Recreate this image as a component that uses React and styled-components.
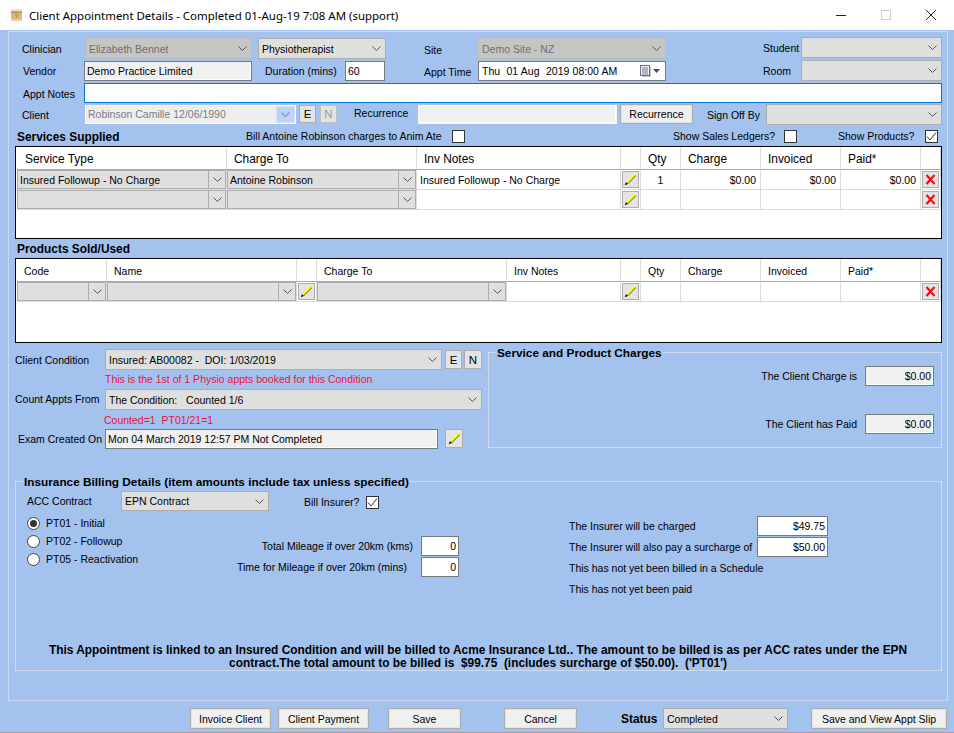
import React from "react";
import styled, { createGlobalStyle, css } from "styled-components";

const Global = createGlobalStyle`
  html, body { margin: 0; padding: 0; background: #a3c2ee; }
  body { font-family: "Liberation Sans", Arial, sans-serif; font-size: 10.5px; color: #000; }
  * { box-sizing: border-box; }
`;

const place = css`
  flex: none;
  margin: ${(p) => p.$t || 0}px 0 0 ${(p) => p.$l || 0}px;
  ${(p) => p.$w && `width: ${p.$w}px;`}
`;

const Window = styled.div`
  width: 954px;
  height: 733px;
  background: #a3c2ee;
  overflow: hidden;
  display: flex;
  flex-direction: column;
`;
const TitleBar = styled.header`
  flex: none;
  height: 30px;
  background: #fff;
  display: flex;
  align-items: center;
  padding-left: 10px;
`;
const TitleText = styled.div`
  margin-left: 6px;
  font-family: "Noto Sans", "Open Sans", sans-serif;
  font-size: 11.45px;
  white-space: nowrap;
`;
const WinButtons = styled.div`
  margin-left: auto;
  display: flex;
  align-items: center;
  margin-right: 18px;
  gap: 35px;
`;
const Panel = styled.main`
  flex: none;
  margin: 1px 0 0 8px;
  width: 940px;
  height: 670px;
  border: 1px solid #cbdaf0;
`;
const Row = styled.div`
  display: flex;
  align-items: flex-start;
  height: ${(p) => p.$h}px;
  margin-top: ${(p) => p.$mt || 0}px;
`;
const Label = styled.div`
  ${place}
  height: 14px;
  line-height: 14px;
  white-space: nowrap;
`;
const Bold = styled(Label)`
  font-weight: 700;
  font-size: 11.9px;
`;
const Red = styled(Label)`
  color: #f0103c;
`;
const ComboBox = styled.div`
  ${place}
  height: ${(p) => p.$h || 21}px;
  display: flex;
  align-items: center;
  background: ${(p) => (p.$off ? "#c5c5c5" : "#dfdfdf")};
  border: 1px solid ${(p) => (p.$off ? "#bcbcbc" : "#adadad")};
  color: ${(p) => (p.$off ? "#6f6f6f" : "#000")};
  padding-left: ${(p) => p.$pl ?? 3}px;
  white-space: nowrap;
  overflow: hidden;
`;
const ComboText = styled.span`
  flex: 1;
  min-width: 0;
`;
const ArrowZone = styled.span`
  flex: none;
  width: ${(p) => (p.$split ? 17 : 18)}px;
  height: 100%;
  display: flex;
  align-items: center;
  justify-content: center;
  ${(p) => p.$split && "border-left: 1px solid #adadad;"}
`;
const ClientCombo = styled.div`
  ${place}
  height: 19px;
  display: flex;
  align-items: stretch;
  background: #eee;
  border: 1px solid #f6f6f6;
  color: #7c7c7c;
  padding-left: 2px;
  line-height: 16px;
  white-space: nowrap;
`;
const ClientArrow = styled.span`
  margin-left: auto;
  width: 19px;
  background: #bfd1f4;
  border: 1px solid #d7e3f9;
  display: flex;
  align-items: center;
  justify-content: center;
`;
const TextBox = styled.div`
  ${place}
  height: ${(p) => p.$h || 20}px;
  line-height: ${(p) => (p.$h || 20) - 2}px;
  background: ${(p) => (p.$ro ? "#f0f0f0" : "#fff")};
  border: 1px solid ${(p) => p.$bc || "#7a7a7a"};
  ${(p) => p.$ro && "box-shadow: inset 0 -1px 0 #fff, inset -1px 0 0 #fff;"}
  padding: 0 2px;
  text-align: ${(p) => (p.$right ? "right" : "left")};
  white-space: nowrap;
`;
const DateBox = styled(TextBox)`
  display: flex;
  align-items: center;
  gap: 0;
  padding-left: 3px;
  word-spacing: 0.3px;
`;
const DateIcons = styled.span`
  margin-left: auto;
  margin-right: 3px;
  display: flex;
  align-items: center;
  gap: 2px;
`;
const SmallBtn = styled.div`
  ${place}
  height: ${(p) => p.$h || 19}px;
  width: ${(p) => p.$w || 17}px;
  background: #e4e4e4;
  border: 1px solid ${(p) => (p.$dim ? "#c2c2c2" : "#adadad")};
  color: ${(p) => (p.$dim ? "#9a9a9a" : "#000")};
  display: flex;
  align-items: center;
  justify-content: center;
  font-size: 11.5px;
`;
const PushBtn = styled.div`
  ${place}
  height: ${(p) => p.$h || 21}px;
  background: #f0f0f0;
  border: 1px solid #adadad;
  box-shadow: inset 0 0 0 1px #e2e2e2;
  display: flex;
  align-items: center;
  justify-content: center;
  white-space: nowrap;
`;
const CheckSquare = styled.div`
  ${place}
  width: 13px;
  height: 13px;
  background: #fff;
  border: 1px solid #333;
  display: flex;
  align-items: center;
  justify-content: center;
`;
const Table = styled.section`
  margin-left: 6px;
  width: 927px;
  height: ${(p) => p.$h}px;
  background: #fff;
  border: 1px solid #000;
  padding: 0 0 0 1px;
`;
const Grid = styled.div`
  display: grid;
  grid-template-columns: ${(p) => p.$cols};
  grid-auto-rows: auto;
`;
const HeadCell = styled.div`
  height: 23px;
  line-height: 24px;
  padding-left: ${(p) => p.$pl || 7}px;
  font-size: ${(p) => p.$fs}px;
  border-right: 1px solid #dcdcdc;
  border-bottom: 1px solid #a8a8a8;
  white-space: nowrap;
`;
const Cell = styled.div`
  height: 20px;
  line-height: 20px;
  padding: 0 ${(p) => (p.$right ? 4 : 3)}px 0 3px;
  border-right: 1px solid #dcdcdc;
  border-bottom: 1px solid #dcdcdc;
  text-align: ${(p) => (p.$right ? "right" : p.$center ? "center" : "left")};
  white-space: nowrap;
  overflow: hidden;
`;
const ComboCell = styled(Cell)`
  padding: 0;
  border-right: 1px solid #dcdcdc;
`;
const IconCell = styled(Cell)`
  padding: 1px 0 0 1px;
`;
const Lower = styled.div`
  display: flex;
  align-items: flex-start;
  margin-top: 6px;
  height: 100px;
`;
const LeftColumn = styled.div`
  flex: none;
  width: 473px;
`;
const GroupBox = styled.section`
  position: relative;
  flex: none;
  border: 1px solid #cfdcee;
`;
const ChargesBox = styled(GroupBox)`
  margin: 3px 0 0 6px;
  width: 454px;
  height: 96px;
  padding: 13px 7px 0 0;
`;
const Legend = styled.div`
  position: absolute;
  left: 7px;
  top: -7px;
  padding: 0 1px;
  height: 14px;
  line-height: 14px;
  background: #a3c2ee;
  font-weight: 700;
  font-size: 11.8px;
  white-space: nowrap;
`;
const ChargeRow = styled.div`
  display: flex;
  justify-content: flex-end;
  align-items: center;
  gap: 8px;
  height: 20px;
  margin-bottom: 28px;
`;
const InsuranceBox = styled(GroupBox)`
  margin: 32px 0 0 6px;
  width: 927px;
  height: 190px;
  padding-top: 9px;
`;
const Columns = styled.div`
  display: flex;
  align-items: flex-start;
  height: 130px;
  margin-top: 3px;
`;
const RadioColumn = styled.div`
  flex: none;
  margin-left: 11px;
  width: 200px;
`;
const RadioRow = styled.div`
  display: flex;
  align-items: center;
  height: 18px;
  gap: 6px;
`;
const RadioDot = styled.div`
  width: 13px;
  height: 13px;
  border-radius: 50%;
  background: #fff;
  border: 1px solid #444;
  display: flex;
  align-items: center;
  justify-content: center;
  &::after {
    content: "";
    display: ${(p) => (p.$on ? "block" : "none")};
    width: 7px;
    height: 7px;
    border-radius: 50%;
    background: #333;
  }
`;
const MileageColumn = styled.div`
  flex: none;
  width: 232px;
  padding-top: 22px;
`;
const MileageRow = styled.div`
  display: flex;
  justify-content: flex-end;
  align-items: center;
  gap: ${(p) => p.$gap}px;
  height: 20px;
  margin-bottom: 1px;
`;
const InsurerColumn = styled.div`
  flex: none;
  margin-left: 110px;
  width: 259px;
  padding-top: 2px;
`;
const InsurerRow = styled.div`
  display: flex;
  justify-content: space-between;
  align-items: flex-start;
  height: 21px;
  line-height: 20px;
  white-space: nowrap;
`;
const Note = styled.div`
  font-weight: 700;
  font-size: 11.9px;
  line-height: 13px;
  text-align: center;
  white-space: nowrap;
  margin-left: -1px;
`;
const Footer = styled.footer`
  flex: none;
  height: 31px;
  display: flex;
  align-items: flex-start;
  padding: 7px 0 0 190px;
`;
const BottomEdge = styled.div`
  flex: none;
  height: 1px;
  background: #a0a0a0;
`;

const Chevron = () => (
  <svg width="9" height="5" viewBox="0 0 9 5">
    <path d="M0.5 0.5 L4.5 4.5 L8.5 0.5" fill="none" stroke="#555" strokeWidth="1" />
  </svg>
);
const ChevronPale = () => (
  <svg width="9" height="5" viewBox="0 0 9 5">
    <path d="M0.5 0.5 L4.5 4.5 L8.5 0.5" fill="none" stroke="#8ea4c8" strokeWidth="1.6" />
  </svg>
);
const Combo = ({ text = "", split, off, ...rest }) => (
  <ComboBox $off={off} {...rest}>
    <ComboText>{text}</ComboText>
    <ArrowZone $split={split}>
      <Chevron />
    </ArrowZone>
  </ComboBox>
);
const Tick = () => (
  <svg width="11" height="11" viewBox="0 0 11 11">
    <path d="M1 5.5 L4 9 L10 1.5" fill="none" stroke="#333" strokeWidth="1" />
  </svg>
);
const Pen = () => (
  <svg width="13" height="13" viewBox="0 0 13 13">
    <path d="M3.5 10.5 L11.5 2.5" stroke="#444" strokeWidth="1.2" fill="none" />
    <path d="M2.8 9.8 L11 1.6" stroke="#ffff00" strokeWidth="2" fill="none" />
    <path d="M0.8 12.2 L2 9 L4 11 Z" fill="#111" />
  </svg>
);
const RedX = () => (
  <svg width="11" height="11" viewBox="0 0 11 11">
    <path d="M1.5 1 L9.5 10 M9.5 1 L1.5 10" stroke="#ee1111" strokeWidth="2.2" fill="none" />
  </svg>
);
const PenBtn = (p) => (
  <SmallBtn $w={17} $h={17} {...p}>
    <Pen />
  </SmallBtn>
);
const XBtn = () => (
  <SmallBtn $w={17} $h={17}>
    <RedX />
  </SmallBtn>
);
const AppIcon = () => (
  <svg width="13" height="14" viewBox="0 0 13 14">
    <path d="M1 3 L3 1 H10 L12 3 V13 H1 Z" fill="#d8b67c" />
    <path d="M3 1 H10 L12 3.5 H1 Z" fill="#e6ddca" />
    <path d="M1 3.5 H12 V5 H1 Z" fill="#b5935c" />
    <path d="M5 7 Q6.5 5.5 8 7 Q8 8 6.5 8.5 V9.5" fill="none" stroke="#a88550" strokeWidth="1" />
    <rect x="1" y="11" width="11" height="2" fill="#e6cfa2" />
  </svg>
);
const CalendarIcon = () => (
  <svg width="11" height="12" viewBox="0 0 11 12">
    <rect x="0.5" y="0.5" width="9" height="10" fill="#eef0f4" stroke="#6b7280" />
    <path d="M2 3 H8 M2 5 H8 M2 7 H8 M2 9 H8 M3 2 V10 M5 2 V10 M7 2 V10" stroke="#9aa3b2" strokeWidth="1" />
    <path d="M10.5 2 V11.5 H2" stroke="#b9bec7" fill="none" />
  </svg>
);
const Caret = () => (
  <svg width="7" height="4" viewBox="0 0 7 4">
    <path d="M0 0 H7 L3.5 4 Z" fill="#3b4f73" />
  </svg>
);

const serviceCols = "210px 190px 204px 20px 40px 80px 80px 80px 20px";
const productCols = "90px 190px 20px 190px 114px 20px 40px 80px 80px 80px 20px";

const ServicesTable = () => (
  <Table $h={93}>
    <Grid $cols={serviceCols}>
      {["Service Type", "Charge To", "Inv Notes", "", "Qty", "Charge", "Invoiced", "Paid*", ""].map((h, i) => (
        <HeadCell key={i} $fs={11.9} $pl={i === 0 ? 8 : 7}>{h}</HeadCell>
      ))}
      <ComboCell><Combo text="Insured Followup - No Charge" split $h={19} $pl={2} /></ComboCell>
      <ComboCell><Combo text="Antoine Robinson" split $h={19} $pl={2} /></ComboCell>
      <Cell>Insured Followup - No Charge</Cell>
      <IconCell><PenBtn /></IconCell>
      <Cell $center>1</Cell>
      <Cell $right>$0.00</Cell>
      <Cell $right>$0.00</Cell>
      <Cell $right>$0.00</Cell>
      <IconCell><XBtn /></IconCell>
      <ComboCell><Combo split $h={19} /></ComboCell>
      <ComboCell><Combo split $h={19} /></ComboCell>
      <Cell />
      <IconCell><PenBtn /></IconCell>
      <Cell />
      <Cell />
      <Cell />
      <Cell />
      <IconCell><XBtn /></IconCell>
    </Grid>
  </Table>
);

const ProductsTable = () => (
  <Table $h={85}>
    <Grid $cols={productCols}>
      {["Code", "Name", "", "Charge To", "Inv Notes", "", "Qty", "Charge", "Invoiced", "Paid*", ""].map((h, i) => (
        <HeadCell key={i} $fs={10.5}>{h}</HeadCell>
      ))}
      <ComboCell><Combo split $h={19} /></ComboCell>
      <ComboCell><Combo split $h={19} /></ComboCell>
      <IconCell><PenBtn /></IconCell>
      <ComboCell><Combo split $h={19} /></ComboCell>
      <Cell />
      <IconCell><PenBtn /></IconCell>
      <Cell />
      <Cell />
      <Cell />
      <Cell />
      <IconCell><XBtn /></IconCell>
    </Grid>
  </Table>
);

export default function App() {
  return (
    <Window>
      <Global />
      <TitleBar>
        <AppIcon />
        <TitleText>Client Appointment Details - Completed 01-Aug-19 7:08 AM (support)</TitleText>
        <WinButtons>
          <svg width="10" height="1" viewBox="0 0 10 1"><rect width="10" height="1" fill="#222" /></svg>
          <svg width="10" height="10" viewBox="0 0 10 10"><rect x="0.5" y="0.5" width="9" height="9" fill="none" stroke="#ccc" /></svg>
          <svg width="10" height="10" viewBox="0 0 10 10"><path d="M0 0 L10 10 M10 0 L0 10" stroke="#222" strokeWidth="1" /></svg>
        </WinButtons>
      </TitleBar>
      <Panel>
        <Row $h={23} $mt={5}>
          <Label $l={13} $t={5} $w={63}>Clinician</Label>
          <Combo text="Elizabeth Bennet" off $t={1} $w={167} />
          <Combo text="Physiotherapist" $l={6} $t={1} $w={128} />
          <Label $l={38} $t={6} $w={54}>Site</Label>
          <Combo text="Demo Site - NZ" off $t={1} $w={188} />
          <Label $l={97} $t={4} $w={38}>Student</Label>
          <Combo $w={141} />
        </Row>
        <Row $h={23}>
          <Label $l={14} $t={4} $w={61}>Vendor</Label>
          <TextBox $ro $t={1} $w={168}>Demo Practice Limited</TextBox>
          <Label $l={13} $t={4} $w={80}>Duration (mins)</Label>
          <TextBox $t={1} $w={40}>60</TextBox>
          <Label $l={39} $t={5} $w={54}>Appt Time</Label>
          <DateBox $t={1} $w={188}>
            Thu&nbsp; 01 Aug&nbsp; 2019 08:00 AM
            <DateIcons><CalendarIcon /><Caret /></DateIcons>
          </DateBox>
          <Label $l={97} $t={4} $w={38}>Room</Label>
          <Combo $w={141} />
        </Row>
        <Row $h={21}>
          <Label $l={14} $t={4} $w={61}>Appt Notes</Label>
          <TextBox $w={858} $bc="#0078d7" />
        </Row>
        <Row $h={24}>
          <Label $l={13} $t={4} $w={63}>Client</Label>
          <ClientCombo $t={1} $w={211}>
            <span>Robinson Camille 12/06/1990</span>
            <ClientArrow><ChevronPale /></ClientArrow>
          </ClientCombo>
          <SmallBtn $l={3} $t={1} $h={18}>E</SmallBtn>
          <SmallBtn $l={4} $t={1} $h={18} $dim>N</SmallBtn>
          <Label $l={17} $t={2} $w={64}>Recurrence</Label>
          <TextBox $ro $t={1} $w={199} $h={19} $bc="#f6f6f6" />
          <PushBtn $l={3} $w={73} $h={20}>Recurrence</PushBtn>
          <Label $l={14} $t={4} $w={59}>Sign Off By</Label>
          <Combo $w={176} />
        </Row>
        <Row $h={18}>
          <Bold $l={8} $t={2} $w={229}>Services Supplied</Bold>
          <Label $t={1} $w={206}>Bill Antoine Robinson charges to Anim Ate</Label>
          <CheckSquare $t={2} />
          <Label $l={208} $t={1} $w={111}>Show Sales Ledgers?</Label>
          <CheckSquare $t={2} />
          <Label $l={41} $t={1} $w={87}>Show Products?</Label>
          <CheckSquare $t={2}><Tick /></CheckSquare>
        </Row>
        <ServicesTable />
        <Row $h={19}>
          <Bold $l={8} $t={3}>Products Sold/Used</Bold>
        </Row>
        <ProductsTable />
        <Lower>
          <LeftColumn>
            <Row $h={21}>
              <Label $l={6} $t={4} $w={90}>Client Condition</Label>
              <Combo text={"Insured: AB00082 -\u00a0 DOI: 1/03/2019"} $w={337} />
              <SmallBtn $l={3} $t={1}>E</SmallBtn>
              <SmallBtn $l={2} $t={1} $w={18}>N</SmallBtn>
            </Row>
            <Row $h={19}>
              <Red $l={96} $t={2}>This is the 1st of 1 Physio appts booked for this Condition</Red>
            </Row>
            <Row $h={21}>
              <Label $l={6} $t={3} $w={90}>Count Appts From</Label>
              <Combo text={"The Condition:\u00a0\u00a0 Counted 1/6"} $w={377} />
            </Row>
            <Row $h={19}>
              <Red $l={95} $t={3}>Counted=1&nbsp; PT01/21=1</Red>
            </Row>
            <Row $h={20}>
              <Label $l={9} $t={3} $w={87}>Exam Created On</Label>
              <TextBox $ro $w={333}>Mon 04 March 2019 12:57 PM Not Completed</TextBox>
              <SmallBtn $l={7} $w={18}><Pen /></SmallBtn>
            </Row>
          </LeftColumn>
          <ChargesBox>
            <Legend>Service and Product Charges</Legend>
            <ChargeRow>
              <Label>The Client Charge is</Label>
              <TextBox $ro $right $w={69}>$0.00</TextBox>
            </ChargeRow>
            <ChargeRow>
              <Label>The Client has Paid</Label>
              <TextBox $ro $right $w={69}>$0.00</TextBox>
            </ChargeRow>
          </ChargesBox>
        </Lower>
        <InsuranceBox>
          <Legend>Insurance Billing Details (item amounts include tax unless specified)</Legend>
          <Row $h={20}>
            <Label $l={11} $t={3} $w={94}>ACC Contract</Label>
            <Combo text="EPN Contract" $w={148} $h={20} />
            <Label $l={35} $t={4} $w={62}>Bill Insurer?</Label>
            <CheckSquare $t={5}><Tick /></CheckSquare>
          </Row>
          <Columns>
            <RadioColumn>
              <RadioRow><RadioDot $on /><span>PT01 - Initial</span></RadioRow>
              <RadioRow><RadioDot /><span>PT02 - Followup</span></RadioRow>
              <RadioRow><RadioDot /><span>PT05 - Reactivation</span></RadioRow>
            </RadioColumn>
            <MileageColumn>
              <MileageRow $gap={8}>
                <Label>Total Mileage if over 20km (kms)</Label>
                <TextBox $right $w={38}>0</TextBox>
              </MileageRow>
              <MileageRow $gap={14}>
                <Label>Time for Mileage if over 20km (mins)</Label>
                <TextBox $right $w={38}>0</TextBox>
              </MileageRow>
            </MileageColumn>
            <InsurerColumn>
              <InsurerRow>The Insurer will be charged<TextBox $right $w={71}>$49.75</TextBox></InsurerRow>
              <InsurerRow>The Insurer will also pay a surcharge of<TextBox $right $w={71}>$50.00</TextBox></InsurerRow>
              <InsurerRow>This has not yet been billed in a Schedule</InsurerRow>
              <InsurerRow>This has not yet been paid</InsurerRow>
            </InsurerColumn>
          </Columns>
          <Note>
            This Appointment is linked to an Insured Condition and will be billed to Acme Insurance Ltd.. The amount to be billed is as per ACC rates under the EPN
            <br />
            contract.The total amount to be billed is&nbsp; $99.75&nbsp; (includes surcharge of $50.00).&nbsp; ('PT01')
          </Note>
        </InsuranceBox>
      </Panel>
      <Footer>
        <PushBtn $w={81}>Invoice Client</PushBtn>
        <PushBtn $l={7} $w={91}>Client Payment</PushBtn>
        <PushBtn $l={19} $w={73}>Save</PushBtn>
        <PushBtn $l={43} $w={73}>Cancel</PushBtn>
        <Bold $l={44} $t={4} $w={42}>Status</Bold>
        <Combo text="Completed" $w={125} />
        <PushBtn $l={23} $w={136}>Save and View Appt Slip</PushBtn>
      </Footer>
      <BottomEdge />
    </Window>
  );
}
